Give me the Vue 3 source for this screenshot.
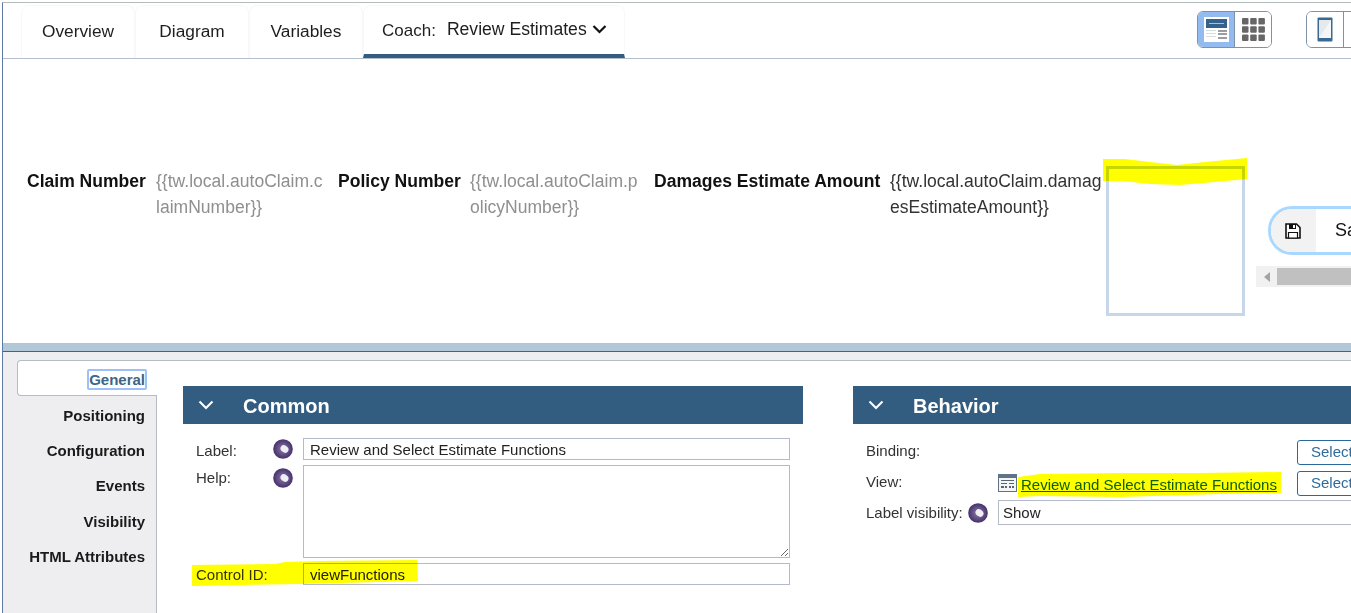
<script setup>
const tabs = ['Overview', 'Diagram', 'Variables']
const fields = [
  { label: 'Claim Number', value: '{{tw.local.autoClaim.claimNumber}}', cls: 'f1' },
  { label: 'Policy Number', value: '{{tw.local.autoClaim.policyNumber}}', cls: 'f2' },
  { label: 'Damages Estimate Amount', value: '{{tw.local.autoClaim.damagesEstimateAmount}}', cls: 'f3' }
]
const sideItems = ['Positioning', 'Configuration', 'Events', 'Visibility', 'HTML Attributes']
const highlights = [
  'M1103 159 L1125 159 L1150 162 L1177 165 L1205 162 L1247 158 L1247 179 L1215 182 L1180 185 L1150 184 L1122 181 L1103 181 Z',
  'M1018 477 L1040 474 L1120 473 L1200 473 L1281 472 L1281 493 L1220 494 L1120 497 L1040 496 L1018 497 Z',
  'M192 565 L275 564 L285 562 L320 561 L417 560 L418 581 L340 583 L300 584 L240 585 L192 586 Z'
]
</script>

<template>
  <div class="app">
    <div class="main">
      <header class="topbar">
        <nav class="tabs">
          <a v-for="t in tabs" :key="t" class="tab">{{ t }}</a>
          <a class="tab active">
            <span class="coach">Coach:</span>
            <span class="coach-name">Review Estimates</span>
            <svg class="caret" width="15" height="10" viewBox="0 0 15 10"><path d="M1.5 2 L7.5 8 L13.5 2" fill="none" stroke="#111" stroke-width="2.2"/></svg>
          </a>
        </nav>
        <div class="toggle">
          <button class="tg on">
            <svg width="25" height="25" viewBox="0 0 25 25">
              <rect width="25" height="25" fill="#fff"/>
              <rect x="2" y="2" width="21" height="9" fill="#34628c"/>
              <rect x="5" y="6" width="15" height="1" fill="#a9c0d6"/>
              <path d="M2 13h10v1H2zM2 16h10v1H2zM2 19h10v1H2z" fill="#d8dde2"/>
              <path d="M14 13h9v2h-9zM14 16h9v2h-9zM14 20h9v2h-9z" fill="#9a9ea3"/>
            </svg>
          </button>
          <button class="tg">
            <svg width="23" height="23" viewBox="0 0 23 23" fill="#666">
              <rect width="6.5" height="6.5" rx="1"/><rect x="8.2" width="6.5" height="6.5" rx="1"/><rect x="16.4" width="6.5" height="6.5" rx="1"/>
              <rect y="8.2" width="6.5" height="6.5" rx="1"/><rect x="8.2" y="8.2" width="6.5" height="6.5" rx="1"/><rect x="16.4" y="8.2" width="6.5" height="6.5" rx="1"/>
              <rect y="16.4" width="6.5" height="6.5" rx="1"/><rect x="8.2" y="16.4" width="6.5" height="6.5" rx="1"/><rect x="16.4" y="16.4" width="6.5" height="6.5" rx="1"/>
            </svg>
          </button>
        </div>
        <div class="toggle devices">
          <button class="tg">
            <svg width="16" height="25" viewBox="0 0 16 25">
              <rect x="0.5" y="0.5" width="15" height="24" rx="1" fill="#3a6a94"/>
              <path d="M2 3h12v18H2z" fill="#e6e9ec"/>
              <path d="M2 21 L14 3 V21 Z" fill="#f5f6f7"/>
            </svg>
          </button>
          <button class="tg narrow"></button>
        </div>
      </header>

      <section class="canvas">
        <div v-for="f in fields" :key="f.label" class="field" :class="f.cls">
          <label class="f-label">{{ f.label }}</label>
          <div class="f-value">{{ f.value }}</div>
        </div>
        <div class="drop"></div>
        <div class="save-col">
          <div class="save">
            <span class="save-icon">
              <svg width="16" height="16" viewBox="0 0 16 16">
                <path d="M1 1 H11.5 L15 4.5 V15 H1 Z" fill="#fff" stroke="#111" stroke-width="1.6"/>
                <path d="M4 1 H11 V6 H4 Z" fill="#111"/>
                <rect x="8" y="2" width="2" height="3" fill="#fff"/>
                <path d="M3.5 9.5 H12.5 V15 H3.5 Z" fill="#fff" stroke="#111" stroke-width="1.2"/>
              </svg>
            </span>
            <span class="save-text">Save</span>
          </div>
          <div class="hscroll">
            <svg width="6" height="10" viewBox="0 0 6 10"><path d="M6 0 V10 L0 5 Z" fill="#a3a3a3"/></svg>
            <div class="thumb"></div>
          </div>
        </div>
      </section>

      <div class="splitter"></div>

      <section class="panel">
        <aside class="side">
          <div class="side-active"><span class="focus">General</span></div>
          <div v-for="s in sideItems" :key="s" class="side-item">{{ s }}</div>
        </aside>
        <div class="content">
          <div class="block common">
            <h2 class="block-head">
              <svg width="16" height="10" viewBox="0 0 16 10"><path d="M1.5 1.5 L8 8 L14.5 1.5" fill="none" stroke="#fff" stroke-width="2"/></svg>
              <span>Common</span>
            </h2>
            <div class="common-form">
              <label class="c-label first">Label:</label>
              <span class="ball-cell"><svg class="ball" width="20" height="20" viewBox="0 0 20 20"><defs><radialGradient id="b1" cx="50%" cy="50%" r="55%"><stop offset="0" stop-color="#8c7aa8"/><stop offset="1" stop-color="#3f2a66"/></radialGradient></defs><circle cx="10" cy="10" r="9.8" fill="url(#b1)"/><ellipse cx="11.5" cy="10" rx="4.2" ry="3.4" fill="#efeef3" transform="rotate(35 11.5 10)"/></svg></span>
              <input class="inp" value="Review and Select Estimate Functions" />

              <label class="c-label help">Help:</label>
              <span class="ball-cell help"><svg class="ball" width="20" height="20" viewBox="0 0 20 20"><circle cx="10" cy="10" r="9.8" fill="url(#b1)"/><ellipse cx="11.5" cy="10" rx="4.2" ry="3.4" fill="#efeef3" transform="rotate(35 11.5 10)"/></svg></span>
              <textarea class="inp area"></textarea>

              <label class="c-label last">Control ID:</label>
              <span></span>
              <input class="inp" value="viewFunctions" />
            </div>
          </div>

          <div class="block behavior">
            <h2 class="block-head">
              <svg width="16" height="10" viewBox="0 0 16 10"><path d="M1.5 1.5 L8 8 L14.5 1.5" fill="none" stroke="#fff" stroke-width="2"/></svg>
              <span>Behavior</span>
            </h2>
            <div class="beh-form">
              <div class="beh-row r1">
                <label class="b-label">Binding:</label>
                <span class="grow"></span>
                <button class="sel">Select</button>
              </div>
              <div class="beh-row r2">
                <label class="b-label">View:</label>
                <svg class="view-icon" width="19" height="18" viewBox="0 0 19 18">
                  <rect width="19" height="18" fill="#5f7386"/>
                  <rect x="1" y="4" width="17" height="13" fill="#f2f4f6"/>
                  <path d="M3 6h13v1H3zM3 9h6v1H3zM11 9h5v1h-5zM3 12h3v2H3zM7 12h2v2H7zM11 12h2v2h-2zM14 12h2v2h-2z" fill="#556575"/>
                </svg>
                <a class="link">Review and Select Estimate Functions</a>
                <span class="grow"></span>
                <button class="sel">Select</button>
              </div>
              <div class="beh-row r3">
                <label class="b-label">Label visibility:</label>
                <svg class="ball lv" width="20" height="20" viewBox="0 0 20 20"><circle cx="10" cy="10" r="9.8" fill="url(#b1)"/><ellipse cx="11.5" cy="10" rx="4.2" ry="3.4" fill="#efeef3" transform="rotate(35 11.5 10)"/></svg>
                <div class="select-box">Show</div>
              </div>
            </div>
          </div>
        </div>
      </section>
    </div>

    <svg class="marker" width="1351" height="613" viewBox="0 0 1351 613">
      <path v-for="(d, i) in highlights" :key="i" :d="d" fill="#ffff00"/>
    </svg>
  </div>
</template>

<style>
html, body { margin: 0; background: #fff; overflow: hidden; }
</style>

<style scoped>
.app {
  position: relative;
  width: 1351px;
  height: 613px;
  overflow: hidden;
  padding: 2px 0 0 2px;
  box-sizing: border-box;
  background: #fff;
  font-family: "Liberation Sans", Arial, sans-serif;
  color: #222;
}
.main {
  width: 1349px;
  height: 611px;
  box-sizing: border-box;
  border-left: 1px solid #5f7aa3;
  border-top: 1px solid #b4bcbc;
  display: flex;
  flex-direction: column;
}
.topbar {
  height: 56px;
  flex: none;
  box-sizing: border-box;
  border-bottom: 1px solid #b6bfcc;
  display: flex;
  align-items: flex-start;
  padding-left: 18px;
}
.tabs { display: flex; height: 55px; }
.tab {
  width: 114px;
  box-sizing: border-box;
  margin-top: 2px;
  padding-top: 13px;
  text-align: center;
  font-size: 17.3px;
  line-height: 24px;
  color: #1e1e1e;
  border: 1px solid #f8f8f8;
  border-bottom: none;
  border-radius: 8px 8px 0 0;
}
.tab.active {
  width: 262px;
  display: flex;
  align-items: flex-start;
  padding-left: 18px;
  border-bottom: 4px solid #335d80;
  border-radius: 8px 8px 0 0;
}
.coach { margin-right: 11px; font-size: 17px; }
.coach-name { margin-top: -2px; font-size: 17.6px; white-space: nowrap; }
.caret { margin: 5px 0 0 5px; }
.toggle {
  display: flex;
  margin: 8px 0 0 572px;
  height: 37px;
  box-sizing: border-box;
  border: 1px solid #7d92a8;
  border-radius: 6px;
  overflow: hidden;
  flex: none;
}
.tg {
  width: 37px;
  padding: 0;
  border: none;
  border-right: 1px solid #7d92a8;
  background: #fff;
  display: flex;
  align-items: center;
  justify-content: center;
}
.toggle > .tg:last-child { border-right: none; width: 36px; }
.tg.on { background: #94bbf0; }
.toggle.devices { margin-left: 34px; }
.toggle > .tg.narrow { width: 30px; }

.canvas {
  height: 284px;
  flex: none;
  box-sizing: border-box;
  padding: 107px 0 0 24px;
  display: flex;
  align-items: flex-start;
}
.field { display: flex; align-items: flex-start; font-size: 17.55px; line-height: 25.5px; margin-top: 3px; flex: none; }
.f-label { font-weight: 700; color: #111; white-space: nowrap; }
.f-value { overflow-wrap: anywhere; color: #8f8f8f; }
.f1 { width: 311px; }
.f1 .f-label { width: 129px; }
.f1 .f-value { width: 169px; }
.f2 { width: 316px; }
.f2 .f-label { width: 132px; }
.f2 .f-value { width: 174px; }
.f3 { width: 452px; }
.f3 .f-label { width: 236px; }
.f3 .f-value { width: 214px; color: #333; }
.drop {
  width: 139px;
  height: 150px;
  flex: none;
  box-sizing: border-box;
  border: 3px solid #c8d6e9;
}
.save-col { margin: 40px 0 0 11px; flex: none; width: 200px; }
.save {
  margin-left: 12px;
  height: 49px;
  box-sizing: border-box;
  border: 3px solid #a8d8ff;
  border-right: none;
  border-radius: 24px 0 0 24px;
  display: flex;
  overflow: hidden;
}
.save-icon { width: 45px; background: #f2f2f2; display: flex; align-items: center; justify-content: center; padding-right: 1px; box-sizing: border-box; }
.save-text { padding-left: 19px; font-size: 18px; line-height: 43px; color: #111; }
.hscroll {
  margin-top: 11px;
  height: 21px;
  background: #f1f1f1;
  display: flex;
  align-items: center;
  padding-left: 8px;
}
.thumb { margin-left: 7px; height: 17px; flex: 1; background: #c0c0c0; }

.splitter { height: 9px; flex: none; background: #b0c8d8; border-bottom: 1px solid #4a6080; box-sizing: border-box; }

.panel { flex: 1; display: flex; background: #eeeef0; padding-top: 8px; min-height: 0; }
.side { width: 154px; flex: none; box-sizing: border-box; padding-left: 14px; }
.side-active {
  height: 36px;
  width: 140px;
  box-sizing: border-box;
  background: #fff;
  border: 1px solid #b4bcc4;
  border-right: none;
  border-radius: 4px 0 0 4px;
  display: flex;
  justify-content: flex-end;
  align-items: center;
  padding-right: 10px;
  position: relative;
  z-index: 1;
}
.focus {
  border: 2px solid #9dc0f8;
  border-radius: 2px;
  margin-top: 2px;
  font-size: 15px;
  font-weight: 700;
  color: #3d6585;
  line-height: 17px;
}
.side-item {
  height: 35.2px;
  line-height: 35.2px;
  text-align: right;
  padding-right: 12px;
  font-size: 15px;
  font-weight: 700;
  color: #1a1a1a;
}
.side-active + .side-item { margin-top: 2px; }
.content {
  flex: 1;
  display: flex;
  background: #fff;
  border: 1px solid #b4bcc4;
  border-right: none;
  border-bottom: none;
  padding: 25px 0 0 26px;
  margin-left: -1px;
  gap: 50px;
  overflow: hidden;
}
.block { flex: none; }
.common { width: 620px; }
.behavior { width: 600px; }
.block-head {
  margin: 0;
  height: 38px;
  background: #335d80;
  color: #fff;
  display: flex;
  align-items: center;
  padding-left: 15px;
  font-size: 20px;
  font-weight: 700;
}
.block-head span { margin-left: 29px; padding-top: 2px; }
.common-form {
  display: grid;
  grid-template-columns: 77px 30px 487px;
  row-gap: 5px;
  padding: 14px 0 0 13px;
  font-size: 15px;
}
.c-label { line-height: 22px; color: #333; }
.c-label.first { height: 22px; line-height: 26px; }
.c-label.last { height: 22px; line-height: 24px; }
.c-label.help { padding-top: 2px; }
.ball-cell { display: flex; align-items: center; }
.ball-cell.help { align-items: flex-start; padding-top: 3px; }
.inp {
  box-sizing: border-box;
  height: 22px;
  width: 487px;
  margin: 0;
  border: 1px solid #b4bac8;
  padding: 0 6px;
  font: 15px "Liberation Sans", Arial, sans-serif;
  color: #222;
  background: #fff;
  outline: none;
}
.area { height: 93px; display: block; }
.beh-form { padding: 16px 0 0 13px; font-size: 15px; position: relative; }
.beh-row { display: flex; align-items: flex-start; }
.b-label { color: #333; line-height: 22px; }
.r1 { height: 31px; width: 521px; }
.r2 { height: 29px; width: 521px; }
.r1 .b-label { width: 132px; }
.r2 .b-label { width: 132px; margin-top: 0; }
.grow { flex: 1; }
.sel {
  width: 90px;
  height: 25px;
  flex: none;
  box-sizing: border-box;
  border: 1px solid #2a6a9a;
  border-radius: 3px;
  background: #fff;
  color: #2f6a9c;
  text-align: left;
  padding: 0 0 2px 13px;
  font: 15px "Liberation Sans", Arial, sans-serif;
}
.view-icon { margin-top: 3px; flex: none; }
.link { margin: 4px 0 0 4px; text-decoration: underline; color: #0f5fb8; line-height: 20px; white-space: nowrap; }
.r3 { align-items: center; height: 25px; }
.r3 .b-label { white-space: nowrap; width: 102px; }
.lv { flex: none; }
.select-box {
  margin-left: 10px;
  width: 400px;
  height: 25px;
  box-sizing: border-box;
  border: 1px solid #b4bac8;
  line-height: 23px;
  padding-left: 4px;
  color: #222;
}
.marker {
  position: absolute;
  left: 0;
  top: 0;
  mix-blend-mode: multiply;
  pointer-events: none;
}
</style>
